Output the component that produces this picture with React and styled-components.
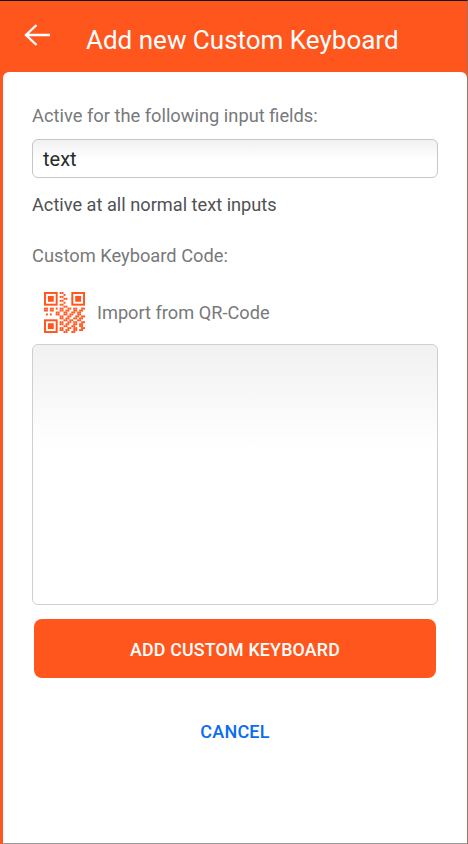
import React from "react";
import styled, { createGlobalStyle } from "styled-components";

const GlobalStyle = createGlobalStyle`
  html, body {
    margin: 0;
    padding: 0;
    background: #ff561e;
    font-family: Roboto, "Liberation Sans", sans-serif;
  }
`;

const Screen = styled.div`
  width: 468px;
  height: 844px;
  overflow: hidden;
  display: flex;
  flex-direction: column;
  background: #ff561e;
  border-top: 1px solid #111;
  border-right: 1px solid #a5705f;
  box-sizing: border-box;
`;

const Header = styled.header`
  height: 71px;
  flex: none;
  display: flex;
  align-items: center;
  padding-left: 24px;
  box-sizing: border-box;
  color: #fff;
`;

const BackButton = styled.button`
  width: 27px;
  height: 24px;
  padding: 0;
  margin: -3px 35px 0 0;
  border: 0;
  background: none;
  color: inherit;
  display: flex;
`;

const Title = styled.h1`
  margin: 6px 0 0;
  font-size: 26px;
  font-weight: 400;
  line-height: 32px;
  white-space: nowrap;
`;

const Card = styled.main`
  flex: 1;
  margin-left: 3px;
  padding: 32px 29px 0;
  background: #fff;
  border-radius: 6px 6px 0 0;
  border-bottom: 1px solid #999;
  display: flex;
  flex-direction: column;
  box-sizing: border-box;
`;

const Label = styled.div`
  font-size: 18.3px;
  line-height: 22px;
  color: #77797b;
  margin-top: 1px;
  margin-bottom: ${(p) => p.$gap}px;
`;

const TextInput = styled.div`
  height: 39px;
  box-sizing: border-box;
  padding-left: 10px;
  display: flex;
  align-items: center;
  font-size: 20px;
  color: #2a2a2a;
  border: 1px solid #c6c6c6;
  border-radius: 6px;
  background: linear-gradient(#f1f1f1, #fff 55%);
`;

const Hint = styled.div`
  margin: 16px 0 28px;
  font-size: 18.2px;
  line-height: 22px;
  color: #4f5153;
`;

const ImportRow = styled.div`
  display: flex;
  align-items: center;
  gap: 12px;
  height: 41px;
  margin: 25px 0 11px 12px;
  font-size: 18.2px;
  color: #77797b;
`;

const CodeArea = styled.div`
  height: 261px;
  box-sizing: border-box;
  border: 1px solid #cfcfcf;
  border-radius: 6px;
  background: linear-gradient(#f1f1f1, #fff 40%);
`;

const PrimaryButton = styled.button`
  height: 59px;
  margin: 14px 2px 0;
  padding: 2px 0 0;
  border: 0;
  border-radius: 8px;
  background: #ff561e;
  color: #fff;
  font-family: inherit;
  font-size: 17.8px;
  font-weight: 500;
  letter-spacing: 0.2px;
`;

const CancelButton = styled.button`
  align-self: center;
  height: 24px;
  margin-top: 41px;
  padding: 0;
  border: 0;
  background: none;
  color: #0a6cf0;
  font-family: inherit;
  font-size: 18px;
  font-weight: 500;
  letter-spacing: 0.2px;
`;

const ArrowIcon = () => (
  <svg width="27" height="24" viewBox="0 0 27 24" fill="none" stroke="currentColor" strokeWidth="2.4">
    <path d="M1.5 12H26M12.5 2 2 12l10.5 10" />
  </svg>
);

// modules of the code outside the three finder squares, on a 21 unit grid
const qrRows = [
  "........##...........",
  "..........#..........",
  "........##...........",
  "..........##.........",
  "........##...........",
  "..........#..........",
  "........##...........",
  "..........##.........",
  "##.##.#.##..##.##..##",
  "##.##...##.##..##.##.",
  "......##..##..##.##..",
  ".#.#..##..##.##..##..",
  "........##..##..##.##",
  "........##.##..##.##.",
  "..........##.##..##..",
  "........##..##.##..##",
  "........##.##..##.##.",
  "..........##..##..##.",
  "........##..##.##..##",
  "........##.##..##.##.",
  "..........##..##.....",
];

const qrCells = qrRows.flatMap((row, y) =>
  [...row].flatMap((c, x) => (c === "#" ? [[x, y]] : []))
);

const Finder = ({ x, y }) => (
  <>
    <rect x={x + 0.5} y={y + 0.5} width="6" height="6" fill="none" stroke="#ff561e" />
    <rect x={x + 2} y={y + 2} width="3" height="3" fill="#ff561e" />
  </>
);

const QrIcon = () => (
  <svg width="41" height="41" viewBox="0 0 21 21">
    <Finder x={0} y={0} />
    <Finder x={14} y={0} />
    <Finder x={0} y={14} />
    {qrCells.map(([x, y]) => (
      <rect key={`${x}-${y}`} x={x} y={y} width="1" height="1" fill="#ff561e" />
    ))}
  </svg>
);

export default function App() {
  return (
    <>
      <GlobalStyle />
      <Screen>
        <Header>
          <BackButton>
            <ArrowIcon />
          </BackButton>
          <Title>Add new Custom Keyboard</Title>
        </Header>
        <Card>
          <Label $gap={12}>Active for the following input fields:</Label>
          <TextInput>text</TextInput>
          <Hint>Active at all normal text inputs</Hint>
          <Label $gap={0}>Custom Keyboard Code:</Label>
          <ImportRow>
            <QrIcon />
            Import from QR-Code
          </ImportRow>
          <CodeArea />
          <PrimaryButton>ADD CUSTOM KEYBOARD</PrimaryButton>
          <CancelButton>CANCEL</CancelButton>
        </Card>
      </Screen>
    </>
  );
}
